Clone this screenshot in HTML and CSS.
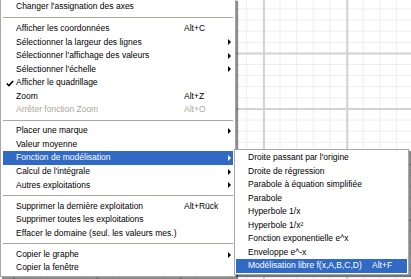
FILE: index.html
```html
<!DOCTYPE html>
<html lang="fr">
<head>
    <meta charset="UTF-8">
    <title>Menu contextuel - graphe</title>
    <link rel="stylesheet" href="styles.css">
</head>
<body>

    <!-- graph canvas behind the menus -->
    <div class="graph"></div>

    <!-- main context menu -->
    <div class="menu main-menu">
        <div class="item"><span class="label">Changer l'assignation des axes</span></div>
        <div class="sep first"></div>
        <div class="item"><span class="label">Afficher les coordonnées</span><span class="key">Alt+C</span></div>
        <div class="item"><span class="label">Sélectionner la largeur des lignes</span><span class="arrow"></span></div>
        <div class="item"><span class="label">Sélectionner l'affichage des valeurs</span><span class="arrow"></span></div>
        <div class="item"><span class="label">Sélectionner l'échelle</span><span class="arrow"></span></div>
        <div class="item checked">
            <span class="tick"><svg width="8" height="7" viewBox="0 0 8 7"><path d="M0.8 3.4 L2.9 5.6 L7.2 0.9" fill="none" stroke="#000" stroke-width="1.5"/></svg></span>
            <span class="label">Afficher le quadrillage</span>
        </div>
        <div class="item"><span class="label">Zoom</span><span class="key">Alt+Z</span></div>
        <div class="item disabled"><span class="label">Arrêter fonction Zoom</span><span class="key">Alt+O</span></div>
        <div class="sep"></div>
        <div class="item"><span class="label">Placer une marque</span><span class="arrow"></span></div>
        <div class="item"><span class="label">Valeur moyenne</span></div>
        <div class="item active"><span class="label">Fonction de modélisation</span><span class="arrow"></span></div>
        <div class="item"><span class="label">Calcul de l'intégrale</span><span class="arrow"></span></div>
        <div class="item"><span class="label">Autres exploitations</span><span class="arrow"></span></div>
        <div class="sep"></div>
        <div class="item"><span class="label">Supprimer la dernière exploitation</span><span class="key">Alt+Rück</span></div>
        <div class="item"><span class="label">Supprimer toutes les exploitations</span></div>
        <div class="item"><span class="label">Effacer le domaine (seul. les valeurs mes.)</span></div>
        <div class="sep"></div>
        <div class="item"><span class="label">Copier le graphe</span><span class="arrow"></span></div>
        <div class="item"><span class="label">Copier la fenêtre</span></div>
    </div>

    <!-- submenu of "Fonction de modélisation" -->
    <div class="menu sub-menu">
        <div class="item"><span class="label">Droite passant par l'origine</span></div>
        <div class="item"><span class="label">Droite de régression</span></div>
        <div class="item"><span class="label">Parabole à équation simplifiée</span></div>
        <div class="item"><span class="label">Parabole</span></div>
        <div class="item"><span class="label">Hyperbole 1/x</span></div>
        <div class="item"><span class="label">Hyperbole 1/x²</span></div>
        <div class="item"><span class="label">Fonction exponentielle e^x</span></div>
        <div class="item"><span class="label">Enveloppe e^-x</span></div>
        <div class="item active"><span class="label">Modélisation libre f(x,A,B,C,D)</span><span class="key">Alt+F</span></div>
    </div>

</body>
</html>
```

FILE: styles.css
```css
body {
    margin: 0;
    width: 411px;
    height: 279px;
    overflow: hidden;
    position: relative;
    background-color: #fff;
    font-family: "Liberation Sans", Arial, sans-serif;
    font-size: 8.5px;
    color: #000;
}

/* grid paper: major lines every 5 minor ones */
.graph {
    width: 100%;
    height: 100%;
    background-color: #fff;
    background-image:
        linear-gradient(to right, #d2d2d2 2px, transparent 2px),
        linear-gradient(to bottom, #d2d2d2 2px, transparent 2px),
        linear-gradient(to right, #ededed 1px, transparent 1px),
        linear-gradient(to bottom, #ededed 1px, transparent 1px);
    background-size: 83.33px 100%, 100% 55.6px, 16.67px 100%, 100% 11.12px;
    background-position: 13px 0, 0 52.5px, 13px 0, 0 8.5px;
}

.menu {
    position: absolute;
    background-color: #fff;
    border: 1px solid #a7a6aa;
    box-shadow: 2px 2px 1px rgba(0, 0, 0, 0.45);
}

.main-menu {
    left: 0;
    top: -1px;
    width: 230px;
    padding: 0 2px 1px 2px;
}

.sub-menu {
    left: 234px;
    top: 149px;
    width: 171px;
    padding: 1px 1px;
}

.item {
    display: flex;
    align-items: center;
    height: 13.55px;
    line-height: 13.55px;
    padding-left: 13px;
    white-space: nowrap;
}

.sub-menu .item {
    padding-left: 12px;
}

.main-menu .label {
    flex: 0 0 168px;
}

.sub-menu .label {
    flex: 0 0 124px;
}

.key {
    flex: 1;
}

.arrow {
    margin-left: auto;
    margin-right: 2px;
    width: 0;
    height: 0;
    border-left: 3px solid #000;
    border-top: 3px solid transparent;
    border-bottom: 3px solid transparent;
}

.item.checked {
    padding-left: 0;
}

.tick {
    display: flex;
    align-items: center;
    width: 10px;
    padding-left: 3px;
}

.item.disabled {
    color: #aca899;
}

.item.active {
    background-color: #316ac5;
    color: #fff;
}

.item.active .arrow {
    border-left-color: #fff;
}

.sep {
    height: 7.5px;
    position: relative;
}

.sep.first {
    height: 8.5px;
}

.sep::after {
    content: "";
    position: absolute;
    left: 0;
    right: 0;
    top: 3px;
    border-top: 1px solid #aca899;
}
```
